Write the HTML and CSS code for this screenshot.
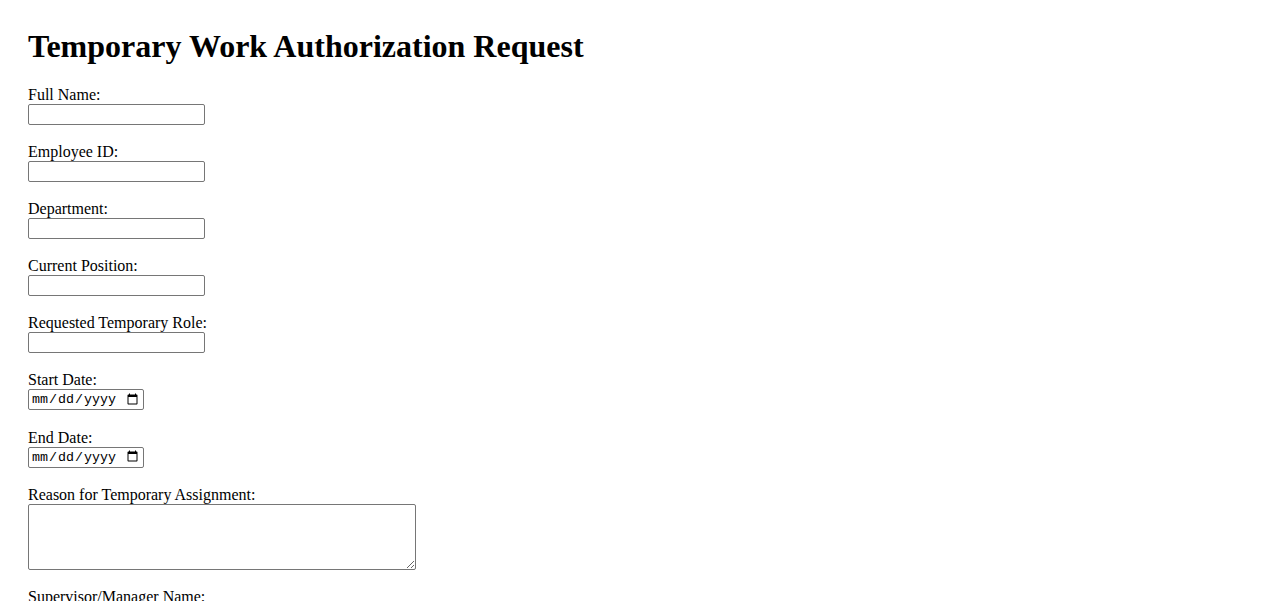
FILE: index.html
```
<!DOCTYPE html>
<html>
<head>
    <meta charset="utf-8" />
    <title>Temporary Work Authorization Request</title>
<link rel="stylesheet" href="styles.css">
</head>
<body>
<div class="page">
    <h1>Temporary Work Authorization Request</h1>

    <form class="request-form">
        <!-- employee info -->
        <label for="fullName">Full Name:</label>
        <input class="text-field" type="text" id="fullName" name="fullName">

        <label for="employeeId">Employee ID:</label>
        <input class="text-field" type="text" id="employeeId" name="employeeId">

        <label for="department">Department:</label>
        <input class="text-field" type="text" id="department" name="department">

        <label for="currentPosition">Current Position:</label>
        <input class="text-field" type="text" id="currentPosition" name="currentPosition">

        <label for="tempRole">Requested Temporary Role:</label>
        <input class="text-field" type="text" id="tempRole" name="tempRole">

        <!-- dates -->
        <label for="startDate">Start Date:</label>
        <input class="date-field" type="date" id="startDate" name="startDate">

        <label for="endDate">End Date:</label>
        <input class="date-field" type="date" id="endDate" name="endDate">

        <label for="reason">Reason for Temporary Assignment:</label>
        <textarea class="area-field" id="reason" name="reason" rows="4" cols="50"></textarea>

        <!-- approval -->
        <label for="supervisor">Supervisor/Manager Name:</label>
        <input class="text-field" type="text" id="supervisor" name="supervisor">

        <label for="supervisorEmail">Supervisor/Manager Email:</label>
        <input class="text-field" type="email" id="supervisorEmail" name="supervisorEmail">

        <input class="submit-btn" type="submit" value="Submit Request">
    </form>
</div>
</body>
</html>
```

FILE: styles.css
```
body {
    margin: 0;
    font-family: "Liberation Serif", "Times New Roman", serif;
    font-size: 16px;
    color: #000000;
    background: #ffffff;
}

.page {
    padding: 28px;
}

h1 {
    margin: 0 0 21px 0;
    font-size: 32px;
    line-height: 37px;
    font-weight: bold;
}

/* one label above each field */
.request-form {
    display: flex;
    flex-direction: column;
    align-items: flex-start;
}

.request-form label {
    display: block;
    line-height: 18px;
}

.text-field,
.date-field,
.area-field {
    box-sizing: border-box;
    margin: 0 0 18px 0;
    border: 1px solid #767676;
    border-radius: 2px;
    background: #ffffff;
}

.text-field {
    width: 177px;
    height: 21px;
    padding: 1px 2px;
    font-family: "Liberation Sans", Arial, sans-serif;
    font-size: 13.33px;
}

.date-field {
    width: 116px;
    height: 21px;
    margin-bottom: 18.5px;
    padding: 1px 2px;
    font-family: "Liberation Mono", "Courier New", monospace;
    font-size: 13.33px;
}

.area-field {
    width: 388px;
    height: 66px;
    padding: 2px;
    font-family: "Liberation Mono", "Courier New", monospace;
    font-size: 13.33px;
}

.submit-btn {
    font-family: "Liberation Sans", Arial, sans-serif;
    font-size: 13.33px;
}
```
